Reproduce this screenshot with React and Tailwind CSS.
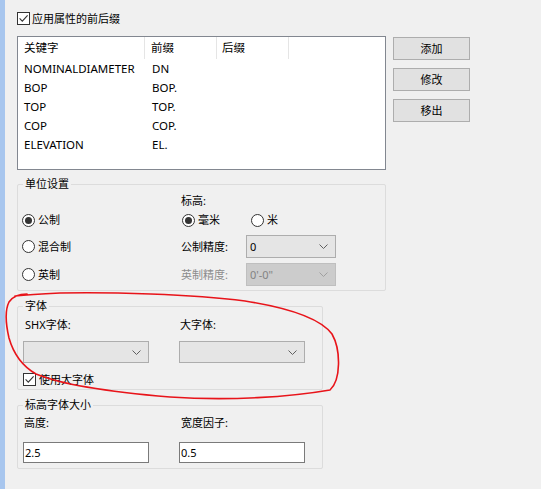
import React from "react";

function Check() {
  return (
    <span className="w-[13px] h-[13px] shrink-0 border border-[#333333] bg-white flex items-center justify-center">
      <svg width="11" height="11" viewBox="0 0 11 11">
        <path d="M1.6 5.4 L4.3 8.2 L9.6 2.4" stroke="#333333" strokeWidth="1.1" fill="none" />
      </svg>
    </span>
  );
}

function Radio({ checked }) {
  return (
    <span className="w-[13px] h-[13px] shrink-0 rounded-full border border-[#333333] bg-white flex items-center justify-center">
      {checked && <span className="w-[7px] h-[7px] rounded-full bg-[#333333]" />}
    </span>
  );
}

function Chevron({ color = "#606060" }) {
  return (
    <svg width="9" height="5" viewBox="0 0 9 5">
      <path d="M0.5 0.5 L4.5 4.5 L8.5 0.5" stroke={color} strokeWidth="1" fill="none" />
    </svg>
  );
}

function Select({ value, w, h = "h-[23px]", disabled }) {
  return (
    <div
      className={
        "flex items-center justify-between pl-[3px] pr-[7px] border " +
        w +
        " " +
        h +
        " " +
        (disabled ? "bg-[#cccccc] border-[#bfbfbf] text-[#838383]" : "bg-[#e5e5e5] border-[#adadad]")
      }
    >
      <span>{value}</span>
      <Chevron color={disabled ? "#a0a0a0" : "#606060"} />
    </div>
  );
}

function Legend({ children }) {
  return (
    <div className="-mt-[8px] ml-[5px] px-[2px] h-[14px] leading-[14px] bg-[#f0f0f0] w-fit">{children}</div>
  );
}

function Btn({ children }) {
  return (
    <div className="w-[77px] h-[23px] bg-[#e1e1e1] border border-[#adadad] flex items-center justify-center">
      {children}
    </div>
  );
}

const rows = [
  ["NOMINALDIAMETER", "DN"],
  ["BOP", "BOP."],
  ["TOP", "TOP."],
  ["COP", "COP."],
  ["ELEVATION", "EL."],
];

export default function App() {
  return (
    <div className="relative w-[541px] h-[489px] overflow-hidden bg-[#f0f0f0] flex text-[11px] leading-[14px] text-black font-['Noto_Sans','Noto_Sans_CJK_SC',sans-serif]">
      <div className="w-[5px] shrink-0 bg-[#a8c6ee]" />
      <div className="flex flex-col pl-[12px] pt-[12px]">
        {/* top checkbox */}
        <div className="flex items-center gap-[2px] h-[13px]">
          <Check />
          <span>应用属性的前后缀</span>
        </div>

        {/* list + buttons */}
        <div className="flex mt-[11px]">
          <div className="w-[369px] h-[134px] border border-[#828790] bg-white text-[11.5px]">
            <div className="flex h-[22px] items-center">
              <div className="w-[127px] h-full border-r border-[#e5e5e5] pl-[6px] flex items-center">关键字</div>
              <div className="w-[72px] h-full border-r border-[#e5e5e5] pl-[6px] flex items-center">前缀</div>
              <div className="w-[72px] h-full border-r border-[#e5e5e5] pl-[5px] flex items-center">后缀</div>
            </div>
            {rows.map(([k, p]) => (
              <div key={k} className="flex h-[19px] items-center">
                <div className="w-[128px] pl-[6px]">{k}</div>
                <div className="w-[72px] pl-[6px]">{p}</div>
              </div>
            ))}
          </div>
          <div className="ml-[7px] pt-[1px] flex flex-col gap-[8px]">
            <Btn>添加</Btn>
            <Btn>修改</Btn>
            <Btn>移出</Btn>
          </div>
        </div>

        {/* 单位设置 */}
        <div className="mt-[14px] w-[369px] border border-[#dcdcdc] rounded-[2px]">
          <Legend>单位设置</Legend>
          <div className="pl-[4px] mt-[3px] pb-[4px] flex flex-col">
            <div className="flex h-[14px] items-center">
              <div className="w-[159px]" />
              <span>标高:</span>
            </div>
            <div className="flex h-[24px] items-center">
              <div className="w-[159px] flex items-center gap-[3px]">
                <Radio checked />
                <span>公制</span>
              </div>
              <div className="ml-[1px] w-[69px] flex items-center gap-[3px]">
                <Radio checked />
                <span>毫米</span>
              </div>
              <div className="flex items-center gap-[3px]">
                <Radio />
                <span>米</span>
              </div>
            </div>
            <div className="flex h-[23px] items-center mt-[3px]">
              <div className="w-[159px] flex items-center gap-[3px]">
                <Radio />
                <span>混合制</span>
              </div>
              <span className="w-[65px]">公制精度:</span>
              <Select value="0" w="w-[90px]" />
            </div>
            <div className="flex h-[23px] items-center mt-[5px]">
              <div className="w-[159px] flex items-center gap-[3px]">
                <Radio />
                <span>英制</span>
              </div>
              <span className="w-[65px] text-[#8c8c8c]">英制精度:</span>
              <Select value={"0'-0\""} w="w-[90px]" disabled />
            </div>
          </div>
        </div>

        {/* 字体 */}
        <div className="mt-[15px] w-[306px] border border-[#dcdcdc] rounded-[2px]">
          <Legend>字体</Legend>
          <div className="pl-[5px] mt-[5px] pb-[3px] flex flex-col">
            <div className="flex h-[14px] items-center">
              <span className="w-[156px] pl-[2px]">SHX字体:</span>
              <span className="pl-[1px]">大字体:</span>
            </div>
            <div className="flex mt-[9px]">
              <div className="w-[156px]">
                <Select value="" w="w-[126px]" h="h-[22px]" />
              </div>
              <Select value="" w="w-[126px]" h="h-[22px]" />
            </div>
            <div className="flex items-center gap-[3px] h-[13px] mt-[10px]">
              <Check />
              <span>使用大字体</span>
            </div>
          </div>
        </div>

        {/* 标高字体大小 */}
        <div className="mt-[15px] w-[306px] border border-[#dcdcdc] rounded-[2px]">
          <Legend>标高字体大小</Legend>
          <div className="pl-[5px] mt-[4px] pb-[5px] flex flex-col">
            <div className="flex h-[14px] items-center">
              <span className="w-[156px] pl-[1px]">高度:</span>
              <span className="pl-[2px]">宽度因子:</span>
            </div>
            <div className="flex mt-[12px]">
              <div className="w-[156px]">
                <div className="w-[126px] h-[21px] border border-[#7a7a7a] bg-white pl-[1px] flex items-center">2.5</div>
              </div>
              <div className="w-[126px] h-[21px] border border-[#7a7a7a] bg-white pl-[1px] flex items-center">0.5</div>
            </div>
          </div>
        </div>
      </div>

      <svg className="absolute inset-0 pointer-events-none" width="541" height="489" viewBox="0 0 541 489">
        <path
          d="M 27 294 C 20 294, 13 296, 9 302 C 5 310, 6 325, 9 338 C 13 352, 22 366, 36 374 C 60 384, 110 392, 170 397 C 230 401, 290 397, 330 390 C 341 380, 341 350, 332 334 C 320 318, 290 308, 245 301 C 190 294, 110 292, 60 293 C 40 294, 25 295, 15 296"
          stroke="#e8141a"
          strokeWidth="1.6"
          fill="none"
          strokeLinecap="round"
        />
      </svg>
    </div>
  );
}
